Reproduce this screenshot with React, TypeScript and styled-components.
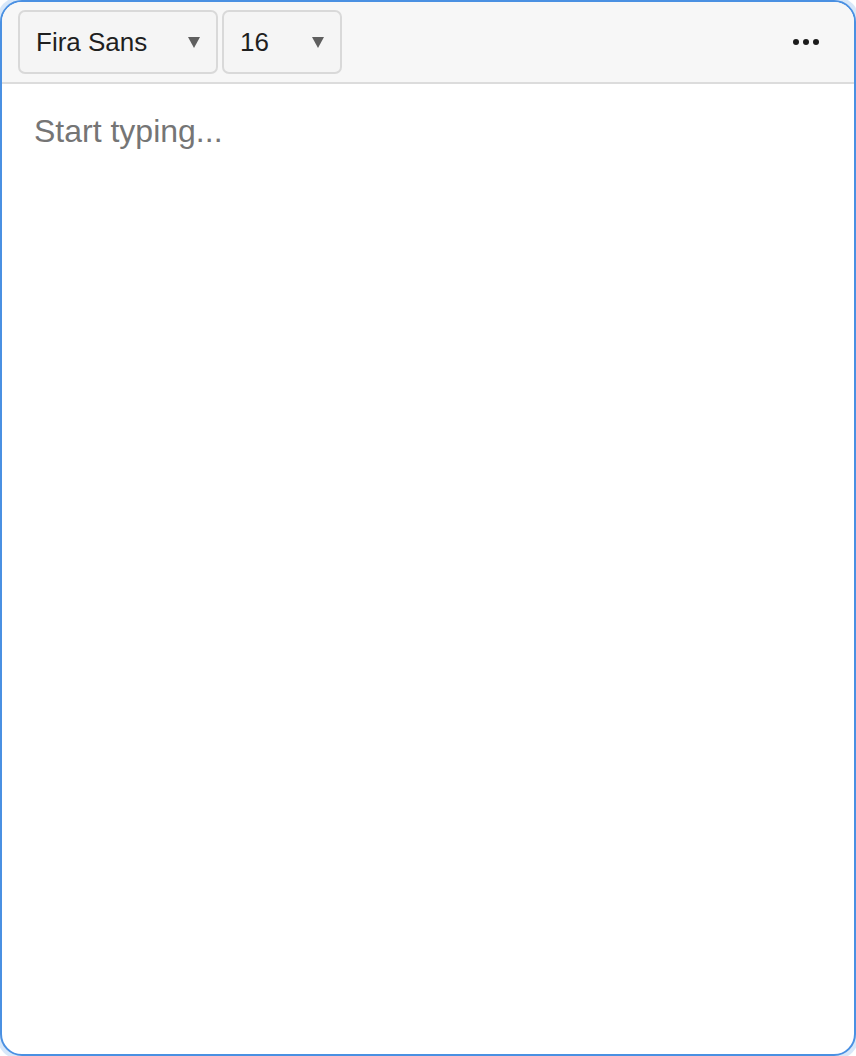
import React from "react";
import styled, { createGlobalStyle } from "styled-components";

const Global = createGlobalStyle`
  html, body { margin: 0; padding: 0; background: #ffffff; }
  * { box-sizing: border-box; }
  body { font-family: "Liberation Sans", Arial, sans-serif; }
`;

const Frame = styled.div`
  width: 100%;
  height: 100vh;
  display: flex;
  flex-direction: column;
  border: 2px solid #4a90e2;
  border-radius: 22px;
  box-shadow: 0 0 0 4px rgba(74, 144, 226, 0.22);
  overflow: hidden;
  background: #ffffff;
`;

const Toolbar = styled.div`
  display: flex;
  align-items: center;
  gap: 4px;
  height: 82px;
  padding: 8px 16px;
  background: #f7f7f7;
  border-bottom: 2px solid #dcdcdc;
  flex-shrink: 0;
`;

const Select = styled.button<{ $width: number }>`
  display: flex;
  align-items: center;
  justify-content: space-between;
  width: ${(p) => p.$width}px;
  height: 64px;
  padding: 0 16px 0 16px;
  border: 2px solid #d9d9d9;
  border-radius: 7px;
  background: #f5f5f5;
  font-family: "Liberation Sans", Arial, sans-serif;
  font-size: 26px;
  color: #1f1f1f;
  cursor: pointer;
`;

const Arrow = styled.svg`
  width: 12px;
  height: 11px;
  flex-shrink: 0;
  margin-top: 1px;
`;

const MoreButton = styled.button`
  margin-left: auto;
  display: flex;
  align-items: center;
  gap: 4px;
  height: 48px;
  padding: 0 19px 0 12px;
  border: none;
  background: transparent;
  cursor: pointer;
`;

const Dot = styled.span`
  width: 6px;
  height: 6px;
  border-radius: 50%;
  background: #1c1c1c;
`;

const Editor = styled.div`
  flex: 1;
  padding: 25px 32px;
  font-family: "Liberation Sans", Arial, sans-serif;
  font-size: 32px;
  line-height: 1.4;
  color: #757575;
`;

const Chevron = () => (
  <Arrow viewBox="0 0 12 11">
    <path d="M0 0 H12 L6 11 Z" fill="#5f5f5f" />
  </Arrow>
);

export default function App() {
  return (
    <>
      <Global />
      <Frame>
        <Toolbar>
          <Select $width={200}>
            <span>Fira Sans</span>
            <Chevron />
          </Select>
          <Select $width={120}>
            <span>16</span>
            <Chevron />
          </Select>
          <MoreButton aria-label="More">
            <Dot />
            <Dot />
            <Dot />
          </MoreButton>
        </Toolbar>
        <Editor>Start typing...</Editor>
      </Frame>
    </>
  );
}
